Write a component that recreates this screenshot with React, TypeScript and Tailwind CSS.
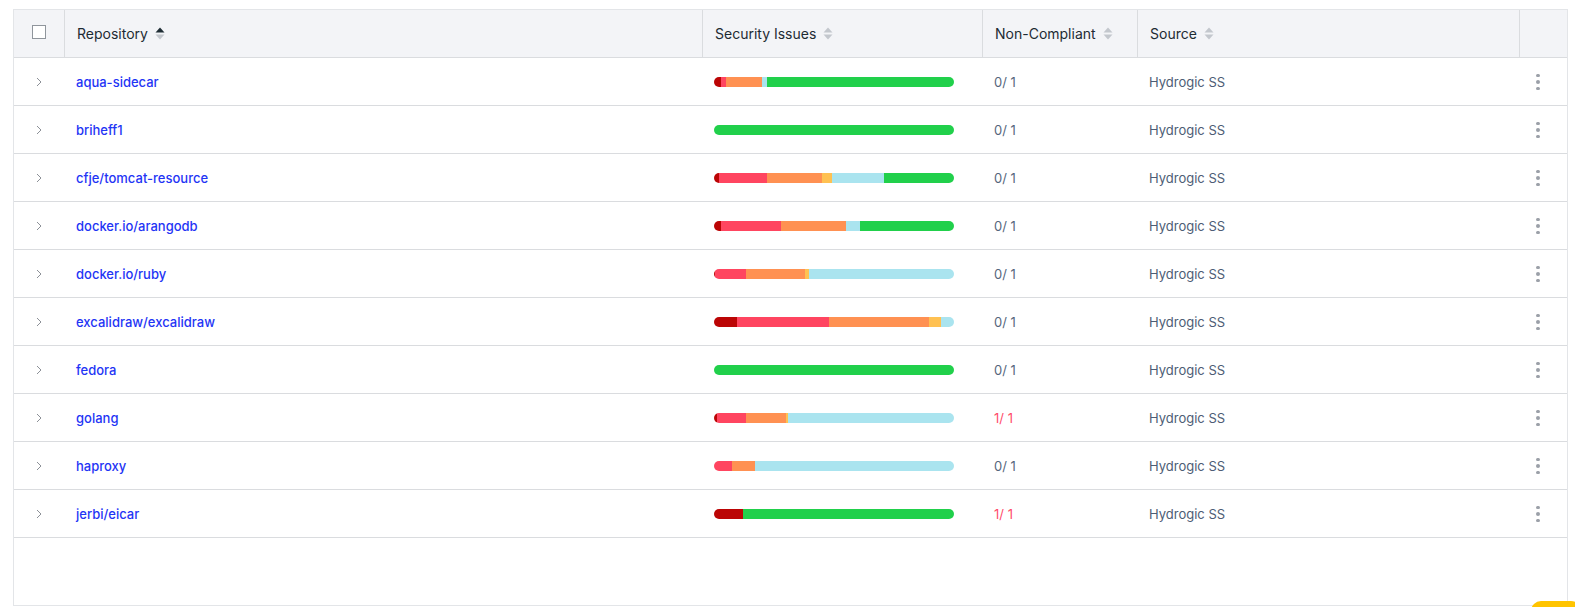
import React from "react";

type Seg = [string, number];
const C = {
  dr: "#bb0505",
  r: "#ff4560",
  o: "#ff9152",
  y: "#ffc152",
  lb: "#aae4ef",
  g: "#21d04b",
};

const rows: { name: string; segs: Seg[]; nc: string; bad?: boolean }[] = [
  { name: "aqua-sidecar", segs: [[C.dr, 7], [C.r, 5], [C.o, 36], [C.lb, 5], [C.g, 187]], nc: "0/ 1" },
  { name: "briheff1", segs: [[C.g, 240]], nc: "0/ 1" },
  { name: "cfje/tomcat-resource", segs: [[C.dr, 5], [C.r, 48], [C.o, 55], [C.y, 10], [C.lb, 52], [C.g, 70]], nc: "0/ 1" },
  { name: "docker.io/arangodb", segs: [[C.dr, 7], [C.r, 60], [C.o, 65], [C.lb, 14], [C.g, 94]], nc: "0/ 1" },
  { name: "docker.io/ruby", segs: [[C.dr, 1], [C.r, 31], [C.o, 59], [C.y, 4], [C.lb, 145]], nc: "0/ 1" },
  { name: "excalidraw/excalidraw", segs: [[C.dr, 23], [C.r, 92], [C.o, 100], [C.y, 12], [C.lb, 13]], nc: "0/ 1" },
  { name: "fedora", segs: [[C.g, 240]], nc: "0/ 1" },
  { name: "golang", segs: [[C.dr, 3], [C.r, 29], [C.o, 40], [C.y, 2], [C.lb, 166]], nc: "1/ 1", bad: true },
  { name: "haproxy", segs: [[C.r, 18], [C.o, 23], [C.lb, 199]], nc: "0/ 1" },
  { name: "jerbi/eicar", segs: [[C.dr, 29], [C.g, 211]], nc: "1/ 1", bad: true },
];

function SortIcon({ active }: { active?: boolean }) {
  return (
    <svg width="10" height="13" viewBox="0 0 10 13" className="ml-[7px]">
      <path d="M0.5 5.5 L5 0.5 L9.5 5.5 Z" fill={active ? "#1f2d35" : "#c3c7cd"} />
      <path d="M0.5 7.5 L5 12.5 L9.5 7.5 Z" fill="#c3c7cd" />
    </svg>
  );
}

const grid = "grid grid-cols-[50px_638px_280px_155px_382px_49px]";

export default function App() {
  return (
    <div
      className="relative h-[607px] w-[1575px] overflow-hidden bg-white pl-[13px] pr-[7px] pt-[9px]"
      style={{ fontFamily: "Inter, 'Noto Sans', sans-serif" }}
    >
      <div className="h-[597px] border border-[#e3e5e8] bg-white">
        <div className={`${grid} h-[48px] border-b border-[#dadcdf] bg-[#f3f4f7] text-[14px] text-[#1d2b33]`}>
          <div className="flex items-center justify-center pb-[4px]">
            <div className="h-[14px] w-[14px] border border-[#8f959c] bg-white" />
          </div>
          <div className="flex items-center border-l border-[#dadcdf] px-3">
            Repository
            <SortIcon active />
          </div>
          <div className="flex items-center border-l border-[#dadcdf] px-3">
            Security Issues
            <SortIcon />
          </div>
          <div className="flex items-center border-l border-[#dadcdf] px-3">
            Non-Compliant
            <SortIcon />
          </div>
          <div className="flex items-center border-l border-[#dadcdf] px-3">
            Source
            <SortIcon />
          </div>
          <div className="border-l border-[#dadcdf]" />
        </div>
        {rows.map((r) => (
          <div key={r.name} className={`${grid} h-[48px] border-b border-[#dadcdf] text-[13px]`}>
            <div className="flex items-center justify-center pr-[1px] pt-[1px]">
              <svg width="6" height="10" viewBox="0 0 6 10">
                <path d="M1 1 L5 5 L1 9" stroke="#8c9097" strokeWidth="1" fill="none" />
              </svg>
            </div>
            <div className="flex items-center pl-3 pt-[2px] font-medium text-[#1f35f5]">{r.name}</div>
            <div className="flex items-center pl-3 pt-[1px]">
              <div className="flex h-[10px] w-[240px] overflow-hidden rounded-full">
                {r.segs.map(([c, w], i) => (
                  <div key={i} className="h-full" style={{ width: w, backgroundColor: c }} />
                ))}
              </div>
            </div>
            <div className={`flex items-center pl-3 pt-[2px] ${r.bad ? "text-[#ff4d6b]" : "text-[#56667c]"}`}>{r.nc}</div>
            <div className="flex items-center pl-3 pt-[2px] text-[#4d5d75]">Hydrogic SS</div>
            <div className="flex items-center pl-[17px] pt-[1px]">
              <div className="flex flex-col gap-[3px]">
                <div className="h-[3.5px] w-[3.5px] rounded-full bg-[#9ba0a8]" />
                <div className="h-[3.5px] w-[3.5px] rounded-full bg-[#9ba0a8]" />
                <div className="h-[3.5px] w-[3.5px] rounded-full bg-[#9ba0a8]" />
              </div>
            </div>
          </div>
        ))}
      </div>
      <div className="absolute bottom-[-14px] right-[-6px] h-[20px] w-[50px] rounded-full bg-[#ffc400]" />
    </div>
  );
}
